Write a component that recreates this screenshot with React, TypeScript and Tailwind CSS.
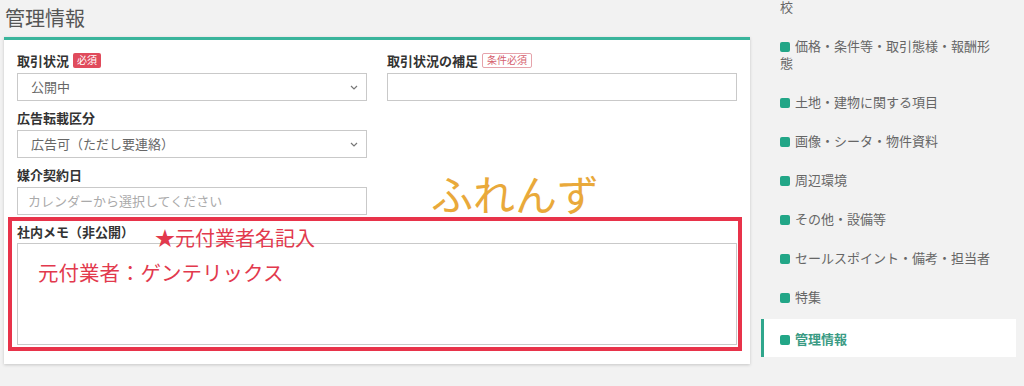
import React from 'react'

const font = { fontFamily: '"Noto Sans CJK JP", "Noto Sans", sans-serif' }

const Chevron = () => (
  <svg width="8" height="5" viewBox="0 0 8 5" className="shrink-0">
    <path d="M1 1l3 3 3-3" fill="none" stroke="#777" strokeWidth="1.2" />
  </svg>
)

const Label: React.FC<{ text: string; badge?: 'required' | 'conditional' }> = ({ text, badge }) => (
  <div className="flex h-[20px] items-center text-[13px] font-bold text-[#333] leading-none">
    <span>{text}</span>
    {badge === 'required' && (
      <span className="ml-[4px] flex h-[15px] items-center rounded-[2px] bg-[#e04b5c] px-[4px] text-[10px] font-normal text-white">
        必須
      </span>
    )}
    {badge === 'conditional' && (
      <span className="ml-[4px] flex h-[15px] items-center rounded-[2px] border border-[#e6a3ab] bg-white px-[4px] text-[10px] font-normal text-[#d5606e]">
        条件必須
      </span>
    )}
  </div>
)

const Select: React.FC<{ value: string }> = ({ value }) => (
  <div className="mt-[3px] flex h-[28px] items-center justify-between border border-[#c9c9c9] bg-white pl-[13px] pr-[8px] text-[13px] text-[#666]">
    <span>{value}</span>
    <Chevron />
  </div>
)

const Input: React.FC<{ placeholder?: string }> = ({ placeholder }) => (
  <div className="mt-[3px] flex h-[28px] items-center border border-[#c9c9c9] bg-white pl-[10px] text-[13px] text-[#aaa]">
    {placeholder}
  </div>
)

const navItems = [
  '土地・建物に関する項目',
  '画像・シータ・物件資料',
  '周辺環境',
  'その他・設備等',
  'セールスポイント・備考・担当者',
  '特集',
]

const Square = () => (
  <span className="mr-[5px] inline-block h-[10px] w-[10px] rounded-[2px] bg-[#22a687] align-[-1px]" />
)

export default function App() {
  return (
    <div className="flex h-[386px] w-[1024px] overflow-hidden bg-[#f2f2f2]" style={font}>
      <div className="w-[761px] shrink-0 pl-[4px] pr-[11px]">
        <h2 className="pl-[1px] pt-[3px] text-[20px] font-normal leading-[30px] text-[#555]">管理情報</h2>
        <div className="relative mt-[4px] border-t-[3px] border-[#3ab59c] bg-white px-[13px] pb-[19px] pt-[10px] shadow-[0_1px_3px_rgba(0,0,0,0.18)]">
          <div className="grid grid-cols-2 gap-x-[20px]">
            <div>
              <Label text="取引状況" badge="required" />
              <Select value="公開中" />
            </div>
            <div>
              <Label text="取引状況の補足" badge="conditional" />
              <Input />
            </div>
          </div>
          <div className="mt-[6px] grid grid-cols-2 gap-x-[20px]">
            <div>
              <Label text="広告転載区分" />
              <Select value="広告可（ただし要連絡）" />
            </div>
          </div>
          <div className="mt-[6px] grid grid-cols-2 gap-x-[20px]">
            <div>
              <Label text="媒介契約日" />
              <Input placeholder="カレンダーから選択してください" />
            </div>
          </div>
          <div className="mt-[6px]">
            <Label text="社内メモ（非公開）" />
            <div className="mt-[2px] h-[102px] border border-[#c9c9c9] bg-white pl-[20px] pt-[15px] text-[20.5px] leading-[26px] text-[#e2394d]">
              元付業者：ゲンテリックス
            </div>
          </div>

          {/* annotations drawn over the form */}
          <div className="pointer-events-none absolute left-[4px] top-[177px] h-[134px] w-[734px] border-[4px] border-[#e8334a]" />
          <div className="absolute left-[151px] top-[186px] text-[20px] leading-[24px] text-[#e2394d]">★元付業者名記入</div>
          <div className="absolute left-[427px] top-[128px] text-[42px] leading-[50px] text-[#e9a93a]">ふれんず</div>
        </div>
      </div>

      <div className="w-[255px] shrink-0 text-[13px] leading-[17px] text-[#666]">
        <div className="mt-[-2px] pb-[11px] pl-[19px]">校</div>
        <div className="py-[11px] pl-[19px] pr-[20px]">
          <Square />
          価格・条件等・取引態様・報酬形態
        </div>
        {navItems.map((item) => (
          <div key={item} className="py-[11px] pl-[19px]">
            <Square />
            {item}
          </div>
        ))}
        <div className="mt-[3px] border-l-[3px] border-[#2fa68c] bg-white py-[10.5px] pl-[16px] font-bold text-[#3a9b84]">
          <Square />
          管理情報
        </div>
      </div>
    </div>
  )
}
